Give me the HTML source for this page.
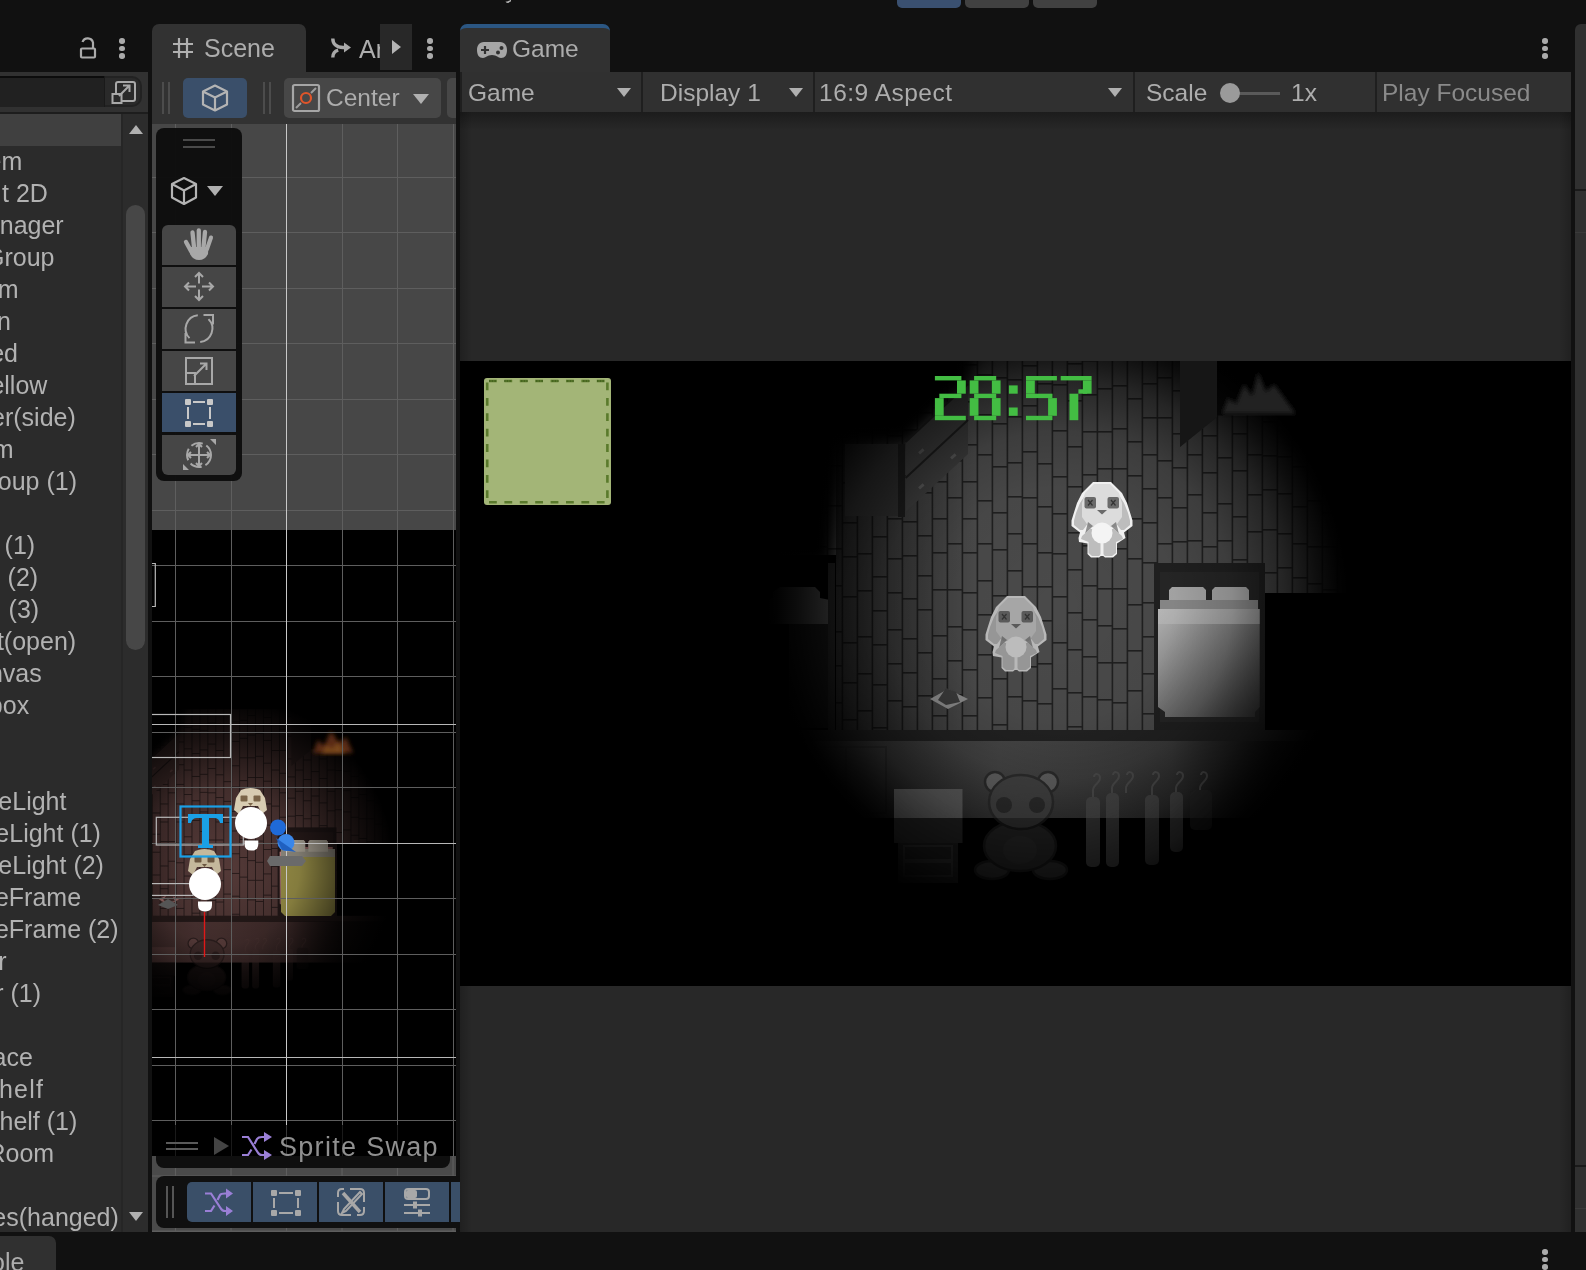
<!DOCTYPE html>
<html><head><meta charset="utf-8">
<style>
*{box-sizing:border-box;margin:0;padding:0}
html,body{width:1586px;height:1270px;overflow:hidden;background:#111111;font-family:"Liberation Sans",sans-serif;color:#c4c4c4}
.a{position:absolute}
.hr{position:absolute;height:32px;line-height:32px;font-size:25px;white-space:nowrap;color:#b2b2b2;will-change:transform}
.kebab{position:absolute;width:6px}
.kebab i{display:block;width:6px;height:6px;border-radius:50%;background:#c4c4c4;margin-bottom:0px}
</style></head>
<body>

<!-- top title descender -->
<div class="a" style="left:505px;top:-3px;width:6px;height:6px;border-bottom:2.2px solid #b0b0b0;border-radius:0 0 4px 4px;transform:rotate(-20deg)"></div>
<!-- top play buttons -->
<div class="a" style="left:897px;top:-6px;width:64px;height:14px;background:#3a5070;border-radius:5px"></div>
<div class="a" style="left:965px;top:-6px;width:64px;height:14px;background:#414141;border-radius:5px"></div>
<div class="a" style="left:1033px;top:-6px;width:64px;height:14px;background:#414141;border-radius:5px"></div>

<!-- ============ HIERARCHY ============ -->
<!-- hierarchy tab row icons -->
<svg class="a" style="left:78px;top:36px" width="20" height="24" viewBox="0 0 20 24"><path d="M4.5 6 A5.5 5.5 0 0 1 15 6.5 V12" fill="none" stroke="#ababab" stroke-width="2.2"/><rect x="3" y="12.5" width="14" height="9" rx="1" fill="none" stroke="#ababab" stroke-width="2.2"/></svg>
<div class="a" style="left:119px;top:38px;width:6px"><i style="display:block;width:5.5px;height:5.5px;border-radius:50%;background:#aaa;margin-bottom:2px"></i><i style="display:block;width:5.5px;height:5.5px;border-radius:50%;background:#aaa;margin-bottom:2px"></i><i style="display:block;width:5.5px;height:5.5px;border-radius:50%;background:#aaa"></i></div>

<div id="hier" class="a" style="left:0;top:72px;width:148px;height:1160px;background:#282828;overflow:hidden">
  <div class="a" style="left:0;top:0;width:148px;height:40px;background:#313131"></div>
  <div class="a" style="left:0;top:40px;width:148px;height:2px;background:#1d1d1d"></div>
  <div class="a" style="left:0;top:4px;width:104px;height:31px;background:#212121;border-top:2px solid #0c0c0c"></div>
  <div class="a" style="left:104px;top:4px;width:3px;height:31px;background:#1a1a1a"></div>
  <div class="a" style="left:105px;top:4px;width:37px;height:31px;background:#2a2a2a;border:2px solid #222;border-left:none;border-radius:0 10px 10px 0"></div>
  <svg class="a" style="left:111px;top:8px" width="26" height="24" viewBox="0 0 26 24"><rect x="5" y="2" width="19" height="19" rx="2" fill="none" stroke="#a9a9a9" stroke-width="2"/><rect x="1.5" y="14" width="9" height="9" fill="#2a2a2a" stroke="#a9a9a9" stroke-width="2"/><path d="M8 16 L18 6 M12 5.5 H18.5 V12" fill="none" stroke="#a9a9a9" stroke-width="2"/></svg>
</div>
<div id="hlist" class="a" style="left:0;top:114px;width:148px;height:1118px;background:#2b2b2b;overflow:hidden">
  <div class="a" style="left:0;top:0;width:121px;height:32px;background:#404040"></div>
  <div class="a" style="left:121px;top:0;width:27px;height:1118px;background:#2c2c2c;border-left:2px solid #262626"></div>
  <div class="a" style="left:126px;top:91px;width:19px;height:445px;background:#474747;border-radius:10px"></div>
  <div class="a" style="left:129px;top:11px;width:0;height:0;border-left:7px solid transparent;border-right:7px solid transparent;border-bottom:9px solid #b0b0b0"></div>
  <div class="a" style="left:129px;top:1098px;width:0;height:0;border-left:7px solid transparent;border-right:7px solid transparent;border-top:9px solid #b0b0b0"></div>
  <div class="a" style="left:0;top:0;width:122px;height:1118px;overflow:hidden">
<div class="hr" style="top:31px;right:99.5px">System</div>
<div class="hr" style="top:63px;right:74.2px">t 2D</div>
<div class="hr" style="top:95px;right:58.0px">Manager</div>
<div class="hr" style="top:127px;right:68.0px">Group</div>
<div class="hr" style="top:159px;right:103.7px">Room</div>
<div class="hr" style="top:191px;right:111.3px">n</div>
<div class="hr" style="top:223px;right:103.7px">Opened</div>
<div class="hr" style="top:255px;right:75.0px">Yellow</div>
<div class="hr" style="top:287px;right:46.5px">Poster(side)</div>
<div class="hr" style="top:319px;right:108.0px">Room</div>
<div class="hr" style="top:351px;right:45.5px">Group (1)</div>
<div class="hr" style="top:415px;right:87.0px">Wall&nbsp;&nbsp;(1)</div>
<div class="hr" style="top:447px;right:84.0px">Wall&nbsp;&nbsp;(2)</div>
<div class="hr" style="top:479px;right:83.2px">Wall&nbsp;&nbsp;(3)</div>
<div class="hr" style="top:511px;right:46.0px">Closet(open)</div>
<div class="hr" style="top:543px;right:80.0px">Canvas</div>
<div class="hr" style="top:575px;right:92.7px">Dialogbox</div>
<div class="hr" style="top:671px;right:55.5px">CandleLight</div>
<div class="hr" style="top:703px;right:21.5px">CandleLight (1)</div>
<div class="hr" style="top:735px;right:18.0px">CandleLight (2)</div>
<div class="hr" style="top:767px;right:40.5px">PictureFrame</div>
<div class="hr" style="top:799px;right:3.4px">PictureFrame (2)</div>
<div class="hr" style="top:831px;right:115.5px">Drawer</div>
<div class="hr" style="top:863px;right:81.0px">Drawer (1)</div>
<div class="hr" style="top:927px;right:89.0px">Fireplace</div>
<div class="hr" style="top:959px;right:78.3px;letter-spacing:1.2px">helf</div>
<div class="hr" style="top:991px;right:45.0px">Bookshelf (1)</div>
<div class="hr" style="top:1023px;right:68.0px">BedRoom</div>
<div class="hr" style="top:1087px;right:3.0px">Clothes(hanged)</div>
  </div>
</div>

<!-- ============ SCENE ============ -->
<div id="scene-tabs">
<div class="a" style="left:152px;top:24px;width:154px;height:48px;background:#323232;border-radius:7px 7px 0 0"></div>
<svg class="a" style="left:171px;top:36px" width="24" height="24" viewBox="0 0 24 24"><path d="M8 2 V22 M16 2 V22 M2 8 H22 M2 16 H22" stroke="#b0b0b0" stroke-width="2.2" fill="none"/></svg>
<div class="a" style="left:204px;top:30px;height:36px;line-height:36px;font-size:25px;color:#adadad;will-change:transform">Scene</div>
<svg class="a" style="left:330px;top:37px" width="22" height="22" viewBox="0 0 22 22"><path d="M2.8 1.5 C2.8 7 6.5 10.5 13 10.5 H15 M2.8 20.5 C2.8 16.5 4.8 14.2 8.2 13.2" fill="none" stroke="#a8a8a8" stroke-width="3.4"/><path d="M14 5.5 L21 10.5 L14 15.5 Z" fill="#a8a8a8"/></svg>
<div class="a" style="left:359px;top:31px;width:21px;height:36px;line-height:36px;font-size:25px;color:#adadad;overflow:hidden;white-space:nowrap;will-change:transform">Arr</div>
<div class="a" style="left:380px;top:24px;width:32px;height:46px;background:#282828"></div>
<div class="a" style="left:392px;top:40px;width:0;height:0;border-top:7.5px solid transparent;border-bottom:7.5px solid transparent;border-left:9px solid #b5b5b5"></div>
<div class="a" style="left:427px;top:38px;width:6px"><i style="display:block;width:5.5px;height:5.5px;border-radius:50%;background:#aaa;margin-bottom:2px"></i><i style="display:block;width:5.5px;height:5.5px;border-radius:50%;background:#aaa;margin-bottom:2px"></i><i style="display:block;width:5.5px;height:5.5px;border-radius:50%;background:#aaa"></i></div>
</div>
<div id="scene-toolbar" class="a" style="left:152px;top:72px;width:304px;height:52px;background:#323232;overflow:hidden">
  <div class="a" style="left:10px;top:10px;width:2px;height:32px;background:#4c4c4c"></div>
  <div class="a" style="left:16px;top:10px;width:2px;height:32px;background:#4c4c4c"></div>
  <div class="a" style="left:31px;top:6px;width:64px;height:40px;background:#3a4f6a;border-radius:5px"></div>
  <svg class="a" style="left:48px;top:11px" width="30" height="30" viewBox="0 0 30 30"><path d="M15 2.5 L27 8.5 V21.5 L15 27.5 L3 21.5 V8.5 Z M3 8.5 L15 14.5 L27 8.5 M15 14.5 V27.5" fill="none" stroke="#b4b4b4" stroke-width="2.2" stroke-linejoin="round"/></svg>
  <div class="a" style="left:111px;top:10px;width:2px;height:32px;background:#4c4c4c"></div>
  <div class="a" style="left:117px;top:10px;width:2px;height:32px;background:#4c4c4c"></div>
  <div class="a" style="left:132px;top:6px;width:157px;height:40px;background:#474747;border-radius:5px"></div>
  <svg class="a" style="left:139px;top:11px" width="30" height="30" viewBox="0 0 30 30"><rect x="2" y="2" width="26" height="26" rx="1.5" fill="none" stroke="#a6a6a6" stroke-width="2.2"/><path d="M5 25 L10 20 M20 10 L25 5" stroke="#9d9d9d" stroke-width="2"/><circle cx="15" cy="15" r="5" fill="none" stroke="#e0552a" stroke-width="2.2"/></svg>
  <div class="a" style="left:174px;top:7px;height:38px;line-height:38px;font-size:24.5px;color:#adadad;will-change:transform">Center</div>
  <div class="a" style="left:261px;top:22px;width:0;height:0;border-left:8px solid transparent;border-right:8px solid transparent;border-top:10px solid #b0b0b0"></div>
  <div class="a" style="left:295px;top:6px;width:20px;height:40px;background:#474747;border-radius:5px"></div>
</div>
<div id="scene-view" class="a" style="left:152px;top:124px;width:304px;height:1108px;overflow:hidden;background:#474747">
<svg class="a" style="left:0;top:0" width="304" height="1108" viewBox="152 124 304 1108">
  <rect x="152" y="530.5" width="304" height="626" fill="#000"/>
  <defs>
 <filter id="brownTint" color-interpolation-filters="sRGB"><feColorMatrix type="matrix" values="1.2 0 0 0 0  0 0.82 0 0 0  0 0 0.8 0 0  0 0 0 1 0"/></filter>
 <radialGradient id="sceneLight" cx="222" cy="868" r="172" gradientUnits="userSpaceOnUse">
  <stop offset="0" stop-color="#000" stop-opacity="0.05"/>
  <stop offset="0.45" stop-color="#000" stop-opacity="0.25"/>
  <stop offset="0.75" stop-color="#000" stop-opacity="0.7"/>
  <stop offset="1" stop-color="#000" stop-opacity="1"/>
 </radialGradient>
</defs>
<g id="scene-room">
 <use href="#room" transform="matrix(0.53 0 0 0.53 -334 529)" filter="url(#brownTint)"/>
 <use href="#lowerObjs" transform="matrix(0.53 0 0 0.53 -334 529)" filter="url(#brownTint)"/>
 <rect x="281" y="849" width="54" height="8" fill="#a8a294"/>
 <path d="M281 857 H335 V912 L331 916 H285 L281 912 Z" fill="#b0a552"/>
 <g transform="matrix(0.53 0 0 0.53 -334 529)"><path d="M1169 609 V590 L1172 587 H1203 L1206 590 V609 Z M1212 609 V590 L1215 587 H1246 L1249 590 V609 Z" fill="#c8c0b0"/></g>
 <rect x="152" y="530" width="304" height="626" fill="url(#sceneLight)"/>
 <path d="M313 753 L318 740 L324 746 L331 731 L339 743 L346 737 L353 753 Z" fill="#5a2a12" filter="url(#soft2)"/>
 <path d="M321 753 L327 745 L332 749 L338 742 L345 753 Z" fill="#7a4a1a" filter="url(#soft2)"/>
 <g id="sbunnies">
  <path d="M241 790 Q250.5 786 260 790 L265 798 L267 810 L262 814 L258 806 H243 L239 814 L234 810 L236 798 Z" fill="#d8ccb2"/>
  <rect x="240.5" y="795.5" width="7" height="6" rx="1" fill="#7a6448"/><rect x="253.5" y="795.5" width="7" height="6" rx="1" fill="#7a6448"/>
  <path d="M248 803 H253 L250.5 806 Z" fill="#7a6448"/>
  <path d="M195 851 Q204.5 847 214 851 L219 859 L221 871 L216 875 L212 867 H197 L193 875 L188 871 L190 859 Z" fill="#c4b89c"/>
  <rect x="194.5" y="856.5" width="7" height="6" rx="1" fill="#6a5640"/><rect x="207.5" y="856.5" width="7" height="6" rx="1" fill="#6a5640"/>
  <path d="M202 864 H207 L204.5 867 Z" fill="#6a5640"/>
 </g>
</g>

  <g stroke="#5e5e5e" stroke-width="1"><line x1="175.5" y1="124" x2="175.5" y2="1232"/><line x1="231.5" y1="124" x2="231.5" y2="1232"/><line x1="342.5" y1="124" x2="342.5" y2="1232"/><line x1="397.5" y1="124" x2="397.5" y2="1232"/><line x1="453.5" y1="124" x2="453.5" y2="1232"/><line x1="152" y1="177.5" x2="456" y2="177.5"/><line x1="152" y1="232.5" x2="456" y2="232.5"/><line x1="152" y1="288.5" x2="456" y2="288.5"/><line x1="152" y1="343.5" x2="456" y2="343.5"/><line x1="152" y1="399.5" x2="456" y2="399.5"/><line x1="152" y1="454.5" x2="456" y2="454.5"/><line x1="152" y1="510.5" x2="456" y2="510.5"/><line x1="152" y1="565.5" x2="456" y2="565.5"/><line x1="152" y1="621.5" x2="456" y2="621.5"/><line x1="152" y1="676.5" x2="456" y2="676.5"/><line x1="152" y1="732.5" x2="456" y2="732.5"/><line x1="152" y1="787.5" x2="456" y2="787.5"/><line x1="152" y1="843.5" x2="456" y2="843.5"/><line x1="152" y1="898.5" x2="456" y2="898.5"/><line x1="152" y1="954.5" x2="456" y2="954.5"/><line x1="152" y1="1009.5" x2="456" y2="1009.5"/><line x1="152" y1="1065.5" x2="456" y2="1065.5"/><line x1="152" y1="1120.5" x2="456" y2="1120.5"/><line x1="152" y1="1176.5" x2="456" y2="1176.5"/></g>
  <line x1="286.5" y1="124" x2="286.5" y2="1232" stroke="#c8c8c8" stroke-width="1"/>
  <g stroke="#b8b8b8" stroke-width="1.2" fill="none">
    <line x1="152" y1="724.5" x2="456" y2="724.5"/>
    <line x1="292" y1="843.5" x2="456" y2="843.5"/>
    <line x1="152" y1="1057.5" x2="456" y2="1057.5"/>
    <rect x="145" y="714.5" width="85.5" height="43"/>
    <rect x="156.3" y="817.3" width="87" height="27.7"/>
    <rect x="145" y="883.6" width="48" height="11.8"/>
    <path d="M152 563.5 H155.3 V606.5 H152"/>
  </g>
  
  <g id="gizmos">
   <rect x="180.5" y="806.5" width="50" height="50" fill="none" stroke="#1aa0e6" stroke-width="2.2"/>
   <path d="M188 814 H223 V823 H220 Q219 818 214 818 H209 V845 H213 V848 H198 V845 H202 V818 H197 Q192 818 191 823 H188 Z" fill="#1aa0e6"/>
   <circle cx="251" cy="823" r="16" fill="#fff"/>
   <path d="M244.5 840.5 H258.3 V844 Q258.3 850.6 251.4 850.6 Q244.5 850.6 244.5 844 Z" fill="#fff"/>
   <circle cx="205" cy="884" r="16" fill="#fff"/>
   <path d="M198 901.5 H212 V905 Q212 911.5 205 911.5 Q198 911.5 198 905 Z" fill="#fff"/>
   <line x1="204.5" y1="912" x2="204.5" y2="957" stroke="#e01818" stroke-width="1.4"/>
   <circle cx="278" cy="827.5" r="8" fill="#1f6ad8"/>
   <circle cx="286" cy="842.5" r="8.5" fill="#3a86e8"/>
   <path d="M276 838 L296 852 L282 850 Z" fill="#2060c0"/>
   <path d="M270 856 H302 L306 861 L302 866 H270 L267 861 Z" fill="#6a6a6a"/>
   <path d="M158 905 L168 899 L178 905 L168 909 Z" fill="#555"/>
  </g>
<line x1="152" y1="1231.3" x2="456" y2="1231.3" stroke="#5a5a5a" stroke-width="1.4"/>
</svg>
</div>


<!-- scene overlays -->
<div class="a" style="left:156px;top:128px;width:86px;height:352.5px;background:rgba(13,13,13,0.96);border-radius:8px"></div>
<div class="a" style="left:183px;top:139px;width:32px;height:2px;background:#4a4a4a"></div>
<div class="a" style="left:183px;top:146px;width:32px;height:2px;background:#4a4a4a"></div>
<svg class="a" style="left:169px;top:176px" width="30" height="30" viewBox="0 0 30 30"><path d="M15 2 L27 8 V21.5 L15 28 L3 21.5 V8 Z M3 8 L15 14.5 L27 8 M15 14.5 V28" fill="none" stroke="#b4b4b4" stroke-width="2.2" stroke-linejoin="round"/></svg>
<div class="a" style="left:207px;top:186px;width:0;height:0;border-left:8px solid transparent;border-right:8px solid transparent;border-top:10.5px solid #b0b0b0"></div>
<div class="a" style="left:162px;top:225px;width:74px;height:40px;background:#464646;border-radius:6px 6px 0 0"></div>
<div class="a" style="left:162px;top:267px;width:74px;height:39.5px;background:#464646"></div>
<div class="a" style="left:162px;top:308.7px;width:74px;height:40px;background:#464646"></div>
<div class="a" style="left:162px;top:351px;width:74px;height:40px;background:#464646"></div>
<div class="a" style="left:162px;top:393.2px;width:74px;height:39.3px;background:#3a4f6a"></div>
<div class="a" style="left:162px;top:435px;width:74px;height:39.5px;background:#464646;border-radius:0 0 6px 6px"></div>
<svg class="a" style="left:162px;top:225px" width="74" height="250" viewBox="0 0 74 250">
 <g fill="#a8a8a8" stroke="#a8a8a8" stroke-linecap="round"><path d="M28 22 L46.5 22 L46 29 Q43 35 37 35 Q31 35 28 29 Z" stroke="none"/><path d="M29.5 27 L24 17" stroke-width="4.3"/><path d="M32 22 L30.5 7.5" stroke-width="4.3"/><path d="M36.8 22 L36.8 5.5" stroke-width="4.3"/><path d="M41.5 22 L43 7" stroke-width="4.3"/><path d="M45 24 L49 12.5" stroke-width="4.1"/></g>
 <g fill="none" stroke="#a8a8a8" stroke-width="2" transform="translate(0,-4)">
  <path d="M37 52 V62.5 M37 68.5 V79 M23 65.5 H34 M40 65.5 H51 M33 56 L37 52 L41 56 M33 75 L37 79 L41 75 M27 61.5 L23 65.5 L27 69.5 M47 61.5 L51 65.5 L47 69.5"/>
 </g>
 <g fill="none" stroke="#a8a8a8" stroke-width="2">
  <path d="M35.8 90.2 A13.5 13.5 0 0 0 27.5 113.1 M23.5 108 V117.5 H33"/>
  <path d="M38.2 117 A13.5 13.5 0 0 0 46.5 94.1 M41.5 90 H51 V99.5"/>
 </g>
 <g fill="none" stroke="#a8a8a8" stroke-width="2" transform="translate(0,-9)">
  <rect x="24" y="142" width="26" height="26"/>
  <path d="M24 157 H33 V168"/>
  <path d="M32 160 L44 148 M38 147.5 H44.5 V154"/>
 </g>
 <g transform="translate(0,-11)">
 <g fill="#c8c8c8"><rect x="23" y="185" width="6" height="6" rx="1"/><rect x="45" y="185" width="6" height="6" rx="1"/><rect x="23" y="207" width="6" height="6" rx="1"/><rect x="45" y="207" width="6" height="6" rx="1"/></g>
 <path d="M31 188 H43 M31 210 H43 M26 193 V205 M48 193 V205" stroke="#c8c8c8" stroke-width="2"/>
 </g>
 <g fill="none" stroke="#a8a8a8" stroke-width="2">
  <circle cx="37" cy="230" r="12" stroke-dasharray="12 4"/>
  <path d="M37 219 V241 M26 230 H48 M34 222 L37 219 L40 222 M34 238 L37 241 L40 238 M29 227 L26 230 L29 233 M45 227 L48 230 L45 233"/>
 </g>
 <path d="M48 214 H54 V220 Z M21 245 V239 L27 245 Z" fill="#a8a8a8"/>
</svg>

<!-- bottom overlays -->
<div class="a" style="left:152px;top:1156px;width:304px;height:76px;background:#4a4a4a"></div>
<svg class="a" style="left:152px;top:1156px" width="304" height="76" viewBox="152 1156 304 76"><g stroke="#5e5e5e" stroke-width="1.2"><line x1="175.5" y1="1156" x2="175.5" y2="1232"/><line x1="231" y1="1156" x2="231" y2="1232"/><line x1="286.5" y1="1156" x2="286.5" y2="1232"/><line x1="342" y1="1156" x2="342" y2="1232"/><line x1="397.5" y1="1156" x2="397.5" y2="1232"/><line x1="453" y1="1156" x2="453" y2="1232"/><line x1="152" y1="1176" x2="456" y2="1176"/></g><line x1="152" y1="1231.3" x2="456" y2="1231.3" stroke="#5e5e5e" stroke-width="1.4"/></svg>
<div class="a" style="left:156px;top:1125px;width:294px;height:31px;background:rgba(0,0,0,0.72)"></div>
<div class="a" style="left:156px;top:1156px;width:294px;height:12px;background:#0f0f0f;border-radius:0 0 8px 8px"></div>
<div class="a" style="left:166px;top:1142px;width:32px;height:2px;background:#5a5a5a"></div>
<div class="a" style="left:166px;top:1148px;width:32px;height:2px;background:#5a5a5a"></div>
<div class="a" style="left:214px;top:1137px;width:0;height:0;border-top:9px solid transparent;border-bottom:9px solid transparent;border-left:15px solid #444"></div>
<svg class="a" style="left:240px;top:1132px" width="32" height="28" viewBox="0 0 32 28"><path d="M2 5 H8 L17.5 20 C18.5 22 19.5 23 22 23 H26 M2 23 H8 L11.5 17.5 M14.5 12 L17 7 C18 5.5 19 5 22 5 H26" fill="none" stroke="#9a7fd6" stroke-width="2.2"/><path d="M24 0 L32 5 L24 10 Z M24 18 L32 23 L24 28 Z" fill="#9a7fd6"/></svg>
<div class="a" style="left:278.5px;top:1128px;height:38px;line-height:38px;font-size:27px;letter-spacing:1.3px;color:#909090;white-space:nowrap;will-change:transform">Sprite Swap</div>

<div class="a" style="left:156px;top:1176.3px;width:310px;height:51.4px;background:#101010;border-radius:8px"></div>
<div class="a" style="left:166px;top:1186px;width:2px;height:32px;background:#555"></div>
<div class="a" style="left:172px;top:1186px;width:2px;height:32px;background:#555"></div>
<div class="a" style="left:187px;top:1182px;width:64px;height:40px;background:#3a4f68;border-radius:5px 0 0 5px"></div>
<div class="a" style="left:253px;top:1182px;width:64px;height:40px;background:#3a4f68"></div>
<div class="a" style="left:319px;top:1182px;width:64px;height:40px;background:#3a4f68"></div>
<div class="a" style="left:385px;top:1182px;width:64px;height:40px;background:#3a4f68"></div>
<div class="a" style="left:451px;top:1182px;width:10px;height:40px;background:#3a4f68"></div>
<svg class="a" style="left:187px;top:1182px" width="264" height="40" viewBox="0 0 264 40">
 <g transform="translate(18,6)"><path d="M0 5.5 H6 L15.5 20 C16.5 22 17.5 23 20 23 H24 M0 23 H6 L9.5 17.5 M12.5 12 L15 7 C16 5.5 17 5.5 20 5.5 H24" fill="none" stroke="#9a7fd6" stroke-width="2.2"/><path d="M21 0.5 L28 5.5 L21 10.5 Z M21 18 L28 23 L21 28 Z" fill="#9a7fd6"/></g>
 <g fill="#a8a8a8"><rect x="84" y="8" width="6" height="6" rx="1"/><rect x="108" y="8" width="6" height="6" rx="1"/><rect x="84" y="28" width="6" height="6" rx="1"/><rect x="108" y="28" width="6" height="6" rx="1"/></g>
 <path d="M92 11 H106 M92 31 H106 M87 16 V26 M111 16 V26" stroke="#a8a8a8" stroke-width="2"/>
 <g fill="none" stroke="#a8a8a8" stroke-width="2"><path d="M163 7 H173 Q177 7 177 11 V20 M164 33 H155 Q151 33 151 29 V20 M151 15 V11 Q151 7 155 7 H157 M177 25 V29 Q177 33 173 33 H170"/></g>
 <path d="M156 11 L173 30" stroke="#a8a8a8" stroke-width="3.5"/>
 <path d="M173 10 L157 27 L155 31 L159 29 L175 12 Z" fill="none" stroke="#a8a8a8" stroke-width="2"/>
 <g fill="none" stroke="#a8a8a8" stroke-width="2"><rect x="218" y="7" width="24" height="10" rx="3"/><path d="M217 23 H243 M217 31 H243"/></g>
 <rect x="219" y="8" width="11" height="8" rx="2" fill="#a8a8a8"/>
 <rect x="226" y="19.5" width="4" height="7" fill="#a8a8a8"/><rect x="231" y="27.5" width="4" height="7" fill="#a8a8a8"/>
</svg>

<!-- ============ GAME ============ -->
<div id="game-tab">
<div class="a" style="left:460px;top:24px;width:149.5px;height:48px;background:#313131;border-radius:7px 7px 0 0;border-top:4px solid #2b5682"></div>
<svg class="a" style="left:476px;top:40px" width="32" height="20" viewBox="0 0 32 20"><path d="M8 2 H24 C29 2 31 6 31 10 C31 15 29 18 25 18 C22 18 21 15 16 15 C11 15 10 18 7 18 C3 18 1 15 1 10 C1 6 3 2 8 2 Z" fill="#a6a6a6"/><path d="M9 6 V14 M5 10 H13" stroke="#313131" stroke-width="2.2"/><circle cx="22" cy="12.5" r="2" fill="#313131"/><circle cx="25.5" cy="8" r="2" fill="#313131"/></svg>
<div class="a" style="left:512px;top:31px;height:36px;line-height:36px;font-size:24.5px;color:#adadad;will-change:transform">Game</div>
<div class="a" style="left:1542px;top:38px;width:6px"><i style="display:block;width:5.5px;height:5.5px;border-radius:50%;background:#aaa;margin-bottom:2px"></i><i style="display:block;width:5.5px;height:5.5px;border-radius:50%;background:#aaa;margin-bottom:2px"></i><i style="display:block;width:5.5px;height:5.5px;border-radius:50%;background:#aaa"></i></div>
</div>
<div id="game-toolbar" class="a" style="left:460px;top:72px;width:1111px;height:40px;background:#1f1f1f">
  <div class="a" style="left:2px;top:0;width:178.5px;height:40px;background:#303030"></div>
  <div class="a" style="left:182.5px;top:0;width:170px;height:40px;background:#303030"></div>
  <div class="a" style="left:354.5px;top:0;width:318.5px;height:40px;background:#303030"></div>
  <div class="a" style="left:675px;top:0;width:240px;height:40px;background:#303030"></div>
  <div class="a" style="left:917px;top:0;width:194px;height:40px;background:#303030"></div>
  <div class="a" style="left:8px;top:3px;height:36px;line-height:36px;font-size:24.5px;color:#adadad;will-change:transform">Game</div>
  <div class="a" style="left:157px;top:16px;width:0;height:0;border-left:7.5px solid transparent;border-right:7.5px solid transparent;border-top:9.5px solid #b0b0b0"></div>
  <div class="a" style="left:200px;top:3px;height:36px;line-height:36px;font-size:24.5px;color:#adadad;will-change:transform">Display 1</div>
  <div class="a" style="left:329px;top:16px;width:0;height:0;border-left:7.5px solid transparent;border-right:7.5px solid transparent;border-top:9.5px solid #b0b0b0"></div>
  <div class="a" style="left:359px;top:3px;height:36px;line-height:36px;font-size:24.5px;letter-spacing:0.5px;color:#adadad;will-change:transform">16:9 Aspect</div>
  <div class="a" style="left:648px;top:16px;width:0;height:0;border-left:7.5px solid transparent;border-right:7.5px solid transparent;border-top:9.5px solid #b0b0b0"></div>
  <div class="a" style="left:686px;top:3px;height:36px;line-height:36px;font-size:24.5px;color:#adadad;will-change:transform">Scale</div>
  <div class="a" style="left:770px;top:19.5px;width:50px;height:3px;background:#5a5a5a"></div>
  <div class="a" style="left:760px;top:11px;width:20px;height:20px;border-radius:50%;background:#9a9a9a"></div>
  <div class="a" style="left:831px;top:3px;height:36px;line-height:36px;font-size:24.5px;color:#adadad;will-change:transform">1x</div>
  <div class="a" style="left:922px;top:3px;height:36px;line-height:36px;font-size:24.5px;color:#8a8a8a;white-space:nowrap;will-change:transform">Play Focused</div>
</div>
<div id="game" class="a" style="left:460px;top:112px;width:1111px;height:1120px;background:#282828;overflow:hidden">
  <div class="a" style="left:0;top:0;width:1111px;height:18px;background:linear-gradient(#1c1c1c,#282828)"></div>
  <div class="a" style="left:1099px;top:0;width:12px;height:1120px;background:linear-gradient(90deg,rgba(0,0,0,0),rgba(0,0,0,0.18))"></div>
  <div class="a" style="left:0;top:0;width:12px;height:1120px;background:linear-gradient(90deg,rgba(0,0,0,0.2),rgba(0,0,0,0))"></div>
  <svg class="a" style="left:0;top:249px" width="1111" height="625" viewBox="460 361 1111 625">
<defs>
 <radialGradient id="lightG" cx="1058" cy="605" r="290" gradientUnits="userSpaceOnUse">
  <stop offset="0" stop-color="#000" stop-opacity="0"/>
  <stop offset="0.4" stop-color="#000" stop-opacity="0.04"/>
  <stop offset="0.6" stop-color="#000" stop-opacity="0.18"/>
  <stop offset="0.78" stop-color="#000" stop-opacity="0.5"/>
  <stop offset="0.9" stop-color="#000" stop-opacity="0.82"/>
  <stop offset="0.97" stop-color="#000" stop-opacity="0.97"/>
  <stop offset="1" stop-color="#000" stop-opacity="1"/>
 </radialGradient>
 <radialGradient id="lightG2" cx="1040" cy="640" r="300" gradientUnits="userSpaceOnUse">
  <stop offset="0" stop-color="#b0b0b0"/>
  <stop offset="0.6" stop-color="#909090"/>
  <stop offset="0.8" stop-color="#505050"/>
  <stop offset="0.95" stop-color="#000"/>
 </radialGradient>
 <mask id="m2" maskUnits="userSpaceOnUse" x="460" y="361" width="1111" height="625"><rect x="460" y="361" width="1111" height="625" fill="url(#lightG2)"/></mask>
 <linearGradient id="leftShade" x1="0" y1="0" x2="1" y2="0">
  <stop offset="0" stop-color="#000" stop-opacity="0.55"/><stop offset="1" stop-color="#000" stop-opacity="0"/>
 </linearGradient>
 <filter id="soft2" x="-20%" y="-20%" width="140%" height="140%"><feGaussianBlur stdDeviation="2"/></filter>
 <filter id="soft" x="-10%" y="-10%" width="120%" height="120%"><feGaussianBlur stdDeviation="7"/></filter>
 <linearGradient id="bedG" x1="0" y1="0" x2="1" y2="1">
  <stop offset="0" stop-color="#b8b8b8"/><stop offset="1" stop-color="#333"/>
 </linearGradient>
 <linearGradient id="bandG" x1="0" y1="0" x2="1" y2="0">
  <stop offset="0" stop-color="#1a1a1a"/><stop offset="0.25" stop-color="#303030"/><stop offset="0.45" stop-color="#484848"/><stop offset="0.62" stop-color="#3c3c3c"/><stop offset="0.72" stop-color="#141414"/><stop offset="1" stop-color="#000"/>
 </linearGradient>
</defs>
<rect x="460" y="361" width="1111" height="625" fill="#000"/>
<g id="room">
 <rect x="540" y="340" width="1020" height="390" fill="#4a4a4a"/>
 <g fill="#202020"><rect x="541.6" y="340" width="1.6" height="390"/><rect x="556.6" y="340" width="1.6" height="390"/><rect x="571.6" y="340" width="1.6" height="390"/><rect x="586.6" y="340" width="1.6" height="390"/><rect x="601.6" y="340" width="1.6" height="390"/><rect x="616.6" y="340" width="1.6" height="390"/><rect x="631.6" y="340" width="1.6" height="390"/><rect x="646.6" y="340" width="1.6" height="390"/><rect x="661.6" y="340" width="1.6" height="390"/><rect x="676.6" y="340" width="1.6" height="390"/><rect x="691.6" y="340" width="1.6" height="390"/><rect x="706.6" y="340" width="1.6" height="390"/><rect x="721.6" y="340" width="1.6" height="390"/><rect x="736.6" y="340" width="1.6" height="390"/><rect x="751.6" y="340" width="1.6" height="390"/><rect x="766.6" y="340" width="1.6" height="390"/><rect x="781.6" y="340" width="1.6" height="390"/><rect x="796.6" y="340" width="1.6" height="390"/><rect x="811.6" y="340" width="1.6" height="390"/><rect x="826.6" y="340" width="1.6" height="390"/><rect x="841.6" y="340" width="1.6" height="390"/><rect x="856.6" y="340" width="1.6" height="390"/><rect x="871.6" y="340" width="1.6" height="390"/><rect x="886.6" y="340" width="1.6" height="390"/><rect x="901.6" y="340" width="1.6" height="390"/><rect x="916.6" y="340" width="1.6" height="390"/><rect x="931.6" y="340" width="1.6" height="390"/><rect x="946.6" y="340" width="1.6" height="390"/><rect x="961.6" y="340" width="1.6" height="390"/><rect x="976.6" y="340" width="1.6" height="390"/><rect x="991.6" y="340" width="1.6" height="390"/><rect x="1006.6" y="340" width="1.6" height="390"/><rect x="1021.6" y="340" width="1.6" height="390"/><rect x="1036.6" y="340" width="1.6" height="390"/><rect x="1051.6" y="340" width="1.6" height="390"/><rect x="1066.6" y="340" width="1.6" height="390"/><rect x="1081.6" y="340" width="1.6" height="390"/><rect x="1096.6" y="340" width="1.6" height="390"/><rect x="1111.6" y="340" width="1.6" height="390"/><rect x="1126.6" y="340" width="1.6" height="390"/><rect x="1141.6" y="340" width="1.6" height="390"/><rect x="1156.6" y="340" width="1.6" height="390"/><rect x="1171.6" y="340" width="1.6" height="390"/><rect x="1186.6" y="340" width="1.6" height="390"/><rect x="1201.6" y="340" width="1.6" height="390"/><rect x="1216.6" y="340" width="1.6" height="390"/><rect x="1231.6" y="340" width="1.6" height="390"/><rect x="1246.6" y="340" width="1.6" height="390"/><rect x="1261.6" y="340" width="1.6" height="390"/><rect x="1276.6" y="340" width="1.6" height="390"/><rect x="1291.6" y="340" width="1.6" height="390"/><rect x="1306.6" y="340" width="1.6" height="390"/><rect x="1321.6" y="340" width="1.6" height="390"/><rect x="1336.6" y="340" width="1.6" height="390"/><rect x="1351.6" y="340" width="1.6" height="390"/><rect x="1366.6" y="340" width="1.6" height="390"/><rect x="1381.6" y="340" width="1.6" height="390"/><rect x="1396.6" y="340" width="1.6" height="390"/><rect x="1411.6" y="340" width="1.6" height="390"/><rect x="1426.6" y="340" width="1.6" height="390"/><rect x="1441.6" y="340" width="1.6" height="390"/><rect x="1456.6" y="340" width="1.6" height="390"/><rect x="1471.6" y="340" width="1.6" height="390"/><rect x="1486.6" y="340" width="1.6" height="390"/><rect x="1501.6" y="340" width="1.6" height="390"/><rect x="1516.6" y="340" width="1.6" height="390"/><rect x="1531.6" y="340" width="1.6" height="390"/><rect x="1546.6" y="340" width="1.6" height="390"/><rect x="542.4" y="355" width="15" height="1.6"/><rect x="542.4" y="392" width="15" height="1.6"/><rect x="542.4" y="435" width="15" height="1.6"/><rect x="542.4" y="469" width="15" height="1.6"/><rect x="542.4" y="503" width="15" height="1.6"/><rect x="542.4" y="549" width="15" height="1.6"/><rect x="542.4" y="583" width="15" height="1.6"/><rect x="542.4" y="623" width="15" height="1.6"/><rect x="542.4" y="669" width="15" height="1.6"/><rect x="542.4" y="703" width="15" height="1.6"/><rect x="557.4" y="350" width="15" height="1.6"/><rect x="557.4" y="384" width="15" height="1.6"/><rect x="557.4" y="427" width="15" height="1.6"/><rect x="557.4" y="470" width="15" height="1.6"/><rect x="557.4" y="504" width="15" height="1.6"/><rect x="557.4" y="541" width="15" height="1.6"/><rect x="557.4" y="575" width="15" height="1.6"/><rect x="557.4" y="621" width="15" height="1.6"/><rect x="557.4" y="664" width="15" height="1.6"/><rect x="557.4" y="698" width="15" height="1.6"/><rect x="572.4" y="346" width="15" height="1.6"/><rect x="572.4" y="383" width="15" height="1.6"/><rect x="572.4" y="429" width="15" height="1.6"/><rect x="572.4" y="463" width="15" height="1.6"/><rect x="572.4" y="509" width="15" height="1.6"/><rect x="572.4" y="555" width="15" height="1.6"/><rect x="572.4" y="598" width="15" height="1.6"/><rect x="572.4" y="632" width="15" height="1.6"/><rect x="572.4" y="669" width="15" height="1.6"/><rect x="572.4" y="703" width="15" height="1.6"/><rect x="587.4" y="379" width="15" height="1.6"/><rect x="587.4" y="419" width="15" height="1.6"/><rect x="587.4" y="462" width="15" height="1.6"/><rect x="587.4" y="499" width="15" height="1.6"/><rect x="587.4" y="545" width="15" height="1.6"/><rect x="587.4" y="579" width="15" height="1.6"/><rect x="587.4" y="625" width="15" height="1.6"/><rect x="587.4" y="665" width="15" height="1.6"/><rect x="587.4" y="711" width="15" height="1.6"/><rect x="602.4" y="345" width="15" height="1.6"/><rect x="602.4" y="391" width="15" height="1.6"/><rect x="602.4" y="428" width="15" height="1.6"/><rect x="602.4" y="468" width="15" height="1.6"/><rect x="602.4" y="502" width="15" height="1.6"/><rect x="602.4" y="548" width="15" height="1.6"/><rect x="602.4" y="582" width="15" height="1.6"/><rect x="602.4" y="628" width="15" height="1.6"/><rect x="602.4" y="662" width="15" height="1.6"/><rect x="602.4" y="708" width="15" height="1.6"/><rect x="617.4" y="362" width="15" height="1.6"/><rect x="617.4" y="408" width="15" height="1.6"/><rect x="617.4" y="451" width="15" height="1.6"/><rect x="617.4" y="491" width="15" height="1.6"/><rect x="617.4" y="534" width="15" height="1.6"/><rect x="617.4" y="580" width="15" height="1.6"/><rect x="617.4" y="623" width="15" height="1.6"/><rect x="617.4" y="663" width="15" height="1.6"/><rect x="617.4" y="703" width="15" height="1.6"/><rect x="632.4" y="376" width="15" height="1.6"/><rect x="632.4" y="413" width="15" height="1.6"/><rect x="632.4" y="447" width="15" height="1.6"/><rect x="632.4" y="493" width="15" height="1.6"/><rect x="632.4" y="533" width="15" height="1.6"/><rect x="632.4" y="579" width="15" height="1.6"/><rect x="632.4" y="622" width="15" height="1.6"/><rect x="632.4" y="662" width="15" height="1.6"/><rect x="632.4" y="705" width="15" height="1.6"/><rect x="647.4" y="367" width="15" height="1.6"/><rect x="647.4" y="401" width="15" height="1.6"/><rect x="647.4" y="435" width="15" height="1.6"/><rect x="647.4" y="481" width="15" height="1.6"/><rect x="647.4" y="524" width="15" height="1.6"/><rect x="647.4" y="561" width="15" height="1.6"/><rect x="647.4" y="601" width="15" height="1.6"/><rect x="647.4" y="638" width="15" height="1.6"/><rect x="647.4" y="681" width="15" height="1.6"/><rect x="647.4" y="724" width="15" height="1.6"/><rect x="662.4" y="383" width="15" height="1.6"/><rect x="662.4" y="417" width="15" height="1.6"/><rect x="662.4" y="463" width="15" height="1.6"/><rect x="662.4" y="509" width="15" height="1.6"/><rect x="662.4" y="549" width="15" height="1.6"/><rect x="662.4" y="589" width="15" height="1.6"/><rect x="662.4" y="629" width="15" height="1.6"/><rect x="662.4" y="675" width="15" height="1.6"/><rect x="662.4" y="718" width="15" height="1.6"/><rect x="677.4" y="376" width="15" height="1.6"/><rect x="677.4" y="410" width="15" height="1.6"/><rect x="677.4" y="444" width="15" height="1.6"/><rect x="677.4" y="484" width="15" height="1.6"/><rect x="677.4" y="527" width="15" height="1.6"/><rect x="677.4" y="561" width="15" height="1.6"/><rect x="677.4" y="595" width="15" height="1.6"/><rect x="677.4" y="635" width="15" height="1.6"/><rect x="677.4" y="681" width="15" height="1.6"/><rect x="677.4" y="724" width="15" height="1.6"/><rect x="692.4" y="372" width="15" height="1.6"/><rect x="692.4" y="412" width="15" height="1.6"/><rect x="692.4" y="446" width="15" height="1.6"/><rect x="692.4" y="489" width="15" height="1.6"/><rect x="692.4" y="529" width="15" height="1.6"/><rect x="692.4" y="566" width="15" height="1.6"/><rect x="692.4" y="612" width="15" height="1.6"/><rect x="692.4" y="646" width="15" height="1.6"/><rect x="692.4" y="689" width="15" height="1.6"/><rect x="692.4" y="723" width="15" height="1.6"/><rect x="707.4" y="375" width="15" height="1.6"/><rect x="707.4" y="412" width="15" height="1.6"/><rect x="707.4" y="449" width="15" height="1.6"/><rect x="707.4" y="492" width="15" height="1.6"/><rect x="707.4" y="535" width="15" height="1.6"/><rect x="707.4" y="578" width="15" height="1.6"/><rect x="707.4" y="612" width="15" height="1.6"/><rect x="707.4" y="649" width="15" height="1.6"/><rect x="707.4" y="692" width="15" height="1.6"/><rect x="722.4" y="365" width="15" height="1.6"/><rect x="722.4" y="402" width="15" height="1.6"/><rect x="722.4" y="445" width="15" height="1.6"/><rect x="722.4" y="491" width="15" height="1.6"/><rect x="722.4" y="531" width="15" height="1.6"/><rect x="722.4" y="574" width="15" height="1.6"/><rect x="722.4" y="614" width="15" height="1.6"/><rect x="722.4" y="657" width="15" height="1.6"/><rect x="722.4" y="694" width="15" height="1.6"/><rect x="737.4" y="344" width="15" height="1.6"/><rect x="737.4" y="381" width="15" height="1.6"/><rect x="737.4" y="418" width="15" height="1.6"/><rect x="737.4" y="455" width="15" height="1.6"/><rect x="737.4" y="489" width="15" height="1.6"/><rect x="737.4" y="532" width="15" height="1.6"/><rect x="737.4" y="578" width="15" height="1.6"/><rect x="737.4" y="615" width="15" height="1.6"/><rect x="737.4" y="655" width="15" height="1.6"/><rect x="737.4" y="695" width="15" height="1.6"/><rect x="752.4" y="347" width="15" height="1.6"/><rect x="752.4" y="393" width="15" height="1.6"/><rect x="752.4" y="433" width="15" height="1.6"/><rect x="752.4" y="479" width="15" height="1.6"/><rect x="752.4" y="525" width="15" height="1.6"/><rect x="752.4" y="565" width="15" height="1.6"/><rect x="752.4" y="602" width="15" height="1.6"/><rect x="752.4" y="648" width="15" height="1.6"/><rect x="752.4" y="694" width="15" height="1.6"/><rect x="752.4" y="728" width="15" height="1.6"/><rect x="767.4" y="380" width="15" height="1.6"/><rect x="767.4" y="426" width="15" height="1.6"/><rect x="767.4" y="469" width="15" height="1.6"/><rect x="767.4" y="512" width="15" height="1.6"/><rect x="767.4" y="555" width="15" height="1.6"/><rect x="767.4" y="598" width="15" height="1.6"/><rect x="767.4" y="632" width="15" height="1.6"/><rect x="767.4" y="675" width="15" height="1.6"/><rect x="767.4" y="718" width="15" height="1.6"/><rect x="782.4" y="349" width="15" height="1.6"/><rect x="782.4" y="386" width="15" height="1.6"/><rect x="782.4" y="429" width="15" height="1.6"/><rect x="782.4" y="466" width="15" height="1.6"/><rect x="782.4" y="500" width="15" height="1.6"/><rect x="782.4" y="540" width="15" height="1.6"/><rect x="782.4" y="586" width="15" height="1.6"/><rect x="782.4" y="620" width="15" height="1.6"/><rect x="782.4" y="654" width="15" height="1.6"/><rect x="782.4" y="688" width="15" height="1.6"/><rect x="797.4" y="347" width="15" height="1.6"/><rect x="797.4" y="381" width="15" height="1.6"/><rect x="797.4" y="421" width="15" height="1.6"/><rect x="797.4" y="467" width="15" height="1.6"/><rect x="797.4" y="501" width="15" height="1.6"/><rect x="797.4" y="535" width="15" height="1.6"/><rect x="797.4" y="572" width="15" height="1.6"/><rect x="797.4" y="618" width="15" height="1.6"/><rect x="797.4" y="661" width="15" height="1.6"/><rect x="797.4" y="698" width="15" height="1.6"/><rect x="812.4" y="383" width="15" height="1.6"/><rect x="812.4" y="429" width="15" height="1.6"/><rect x="812.4" y="469" width="15" height="1.6"/><rect x="812.4" y="512" width="15" height="1.6"/><rect x="812.4" y="546" width="15" height="1.6"/><rect x="812.4" y="580" width="15" height="1.6"/><rect x="812.4" y="623" width="15" height="1.6"/><rect x="812.4" y="666" width="15" height="1.6"/><rect x="812.4" y="709" width="15" height="1.6"/><rect x="827.4" y="354" width="15" height="1.6"/><rect x="827.4" y="391" width="15" height="1.6"/><rect x="827.4" y="425" width="15" height="1.6"/><rect x="827.4" y="465" width="15" height="1.6"/><rect x="827.4" y="505" width="15" height="1.6"/><rect x="827.4" y="548" width="15" height="1.6"/><rect x="827.4" y="585" width="15" height="1.6"/><rect x="827.4" y="631" width="15" height="1.6"/><rect x="827.4" y="665" width="15" height="1.6"/><rect x="827.4" y="702" width="15" height="1.6"/><rect x="842.4" y="356" width="15" height="1.6"/><rect x="842.4" y="402" width="15" height="1.6"/><rect x="842.4" y="436" width="15" height="1.6"/><rect x="842.4" y="482" width="15" height="1.6"/><rect x="842.4" y="522" width="15" height="1.6"/><rect x="842.4" y="556" width="15" height="1.6"/><rect x="842.4" y="596" width="15" height="1.6"/><rect x="842.4" y="642" width="15" height="1.6"/><rect x="842.4" y="682" width="15" height="1.6"/><rect x="842.4" y="719" width="15" height="1.6"/><rect x="857.4" y="375" width="15" height="1.6"/><rect x="857.4" y="421" width="15" height="1.6"/><rect x="857.4" y="467" width="15" height="1.6"/><rect x="857.4" y="513" width="15" height="1.6"/><rect x="857.4" y="553" width="15" height="1.6"/><rect x="857.4" y="590" width="15" height="1.6"/><rect x="857.4" y="636" width="15" height="1.6"/><rect x="857.4" y="673" width="15" height="1.6"/><rect x="857.4" y="710" width="15" height="1.6"/><rect x="872.4" y="373" width="15" height="1.6"/><rect x="872.4" y="410" width="15" height="1.6"/><rect x="872.4" y="447" width="15" height="1.6"/><rect x="872.4" y="493" width="15" height="1.6"/><rect x="872.4" y="536" width="15" height="1.6"/><rect x="872.4" y="576" width="15" height="1.6"/><rect x="872.4" y="610" width="15" height="1.6"/><rect x="872.4" y="644" width="15" height="1.6"/><rect x="872.4" y="684" width="15" height="1.6"/><rect x="872.4" y="727" width="15" height="1.6"/><rect x="887.4" y="349" width="15" height="1.6"/><rect x="887.4" y="395" width="15" height="1.6"/><rect x="887.4" y="435" width="15" height="1.6"/><rect x="887.4" y="478" width="15" height="1.6"/><rect x="887.4" y="518" width="15" height="1.6"/><rect x="887.4" y="558" width="15" height="1.6"/><rect x="887.4" y="592" width="15" height="1.6"/><rect x="887.4" y="629" width="15" height="1.6"/><rect x="887.4" y="663" width="15" height="1.6"/><rect x="887.4" y="700" width="15" height="1.6"/><rect x="902.4" y="349" width="15" height="1.6"/><rect x="902.4" y="386" width="15" height="1.6"/><rect x="902.4" y="429" width="15" height="1.6"/><rect x="902.4" y="475" width="15" height="1.6"/><rect x="902.4" y="521" width="15" height="1.6"/><rect x="902.4" y="555" width="15" height="1.6"/><rect x="902.4" y="598" width="15" height="1.6"/><rect x="902.4" y="638" width="15" height="1.6"/><rect x="902.4" y="672" width="15" height="1.6"/><rect x="902.4" y="706" width="15" height="1.6"/><rect x="917.4" y="375" width="15" height="1.6"/><rect x="917.4" y="412" width="15" height="1.6"/><rect x="917.4" y="455" width="15" height="1.6"/><rect x="917.4" y="492" width="15" height="1.6"/><rect x="917.4" y="535" width="15" height="1.6"/><rect x="917.4" y="575" width="15" height="1.6"/><rect x="917.4" y="609" width="15" height="1.6"/><rect x="917.4" y="652" width="15" height="1.6"/><rect x="917.4" y="695" width="15" height="1.6"/><rect x="932.4" y="373" width="15" height="1.6"/><rect x="932.4" y="407" width="15" height="1.6"/><rect x="932.4" y="444" width="15" height="1.6"/><rect x="932.4" y="481" width="15" height="1.6"/><rect x="932.4" y="518" width="15" height="1.6"/><rect x="932.4" y="552" width="15" height="1.6"/><rect x="932.4" y="589" width="15" height="1.6"/><rect x="932.4" y="635" width="15" height="1.6"/><rect x="932.4" y="678" width="15" height="1.6"/><rect x="932.4" y="715" width="15" height="1.6"/><rect x="947.4" y="377" width="15" height="1.6"/><rect x="947.4" y="420" width="15" height="1.6"/><rect x="947.4" y="460" width="15" height="1.6"/><rect x="947.4" y="497" width="15" height="1.6"/><rect x="947.4" y="543" width="15" height="1.6"/><rect x="947.4" y="589" width="15" height="1.6"/><rect x="947.4" y="626" width="15" height="1.6"/><rect x="947.4" y="660" width="15" height="1.6"/><rect x="947.4" y="694" width="15" height="1.6"/><rect x="962.4" y="364" width="15" height="1.6"/><rect x="962.4" y="401" width="15" height="1.6"/><rect x="962.4" y="444" width="15" height="1.6"/><rect x="962.4" y="481" width="15" height="1.6"/><rect x="962.4" y="518" width="15" height="1.6"/><rect x="962.4" y="552" width="15" height="1.6"/><rect x="962.4" y="592" width="15" height="1.6"/><rect x="962.4" y="629" width="15" height="1.6"/><rect x="962.4" y="669" width="15" height="1.6"/><rect x="962.4" y="715" width="15" height="1.6"/><rect x="977.4" y="374" width="15" height="1.6"/><rect x="977.4" y="414" width="15" height="1.6"/><rect x="977.4" y="454" width="15" height="1.6"/><rect x="977.4" y="500" width="15" height="1.6"/><rect x="977.4" y="543" width="15" height="1.6"/><rect x="977.4" y="580" width="15" height="1.6"/><rect x="977.4" y="614" width="15" height="1.6"/><rect x="977.4" y="654" width="15" height="1.6"/><rect x="977.4" y="697" width="15" height="1.6"/><rect x="992.4" y="377" width="15" height="1.6"/><rect x="992.4" y="423" width="15" height="1.6"/><rect x="992.4" y="466" width="15" height="1.6"/><rect x="992.4" y="512" width="15" height="1.6"/><rect x="992.4" y="549" width="15" height="1.6"/><rect x="992.4" y="595" width="15" height="1.6"/><rect x="992.4" y="632" width="15" height="1.6"/><rect x="992.4" y="678" width="15" height="1.6"/><rect x="992.4" y="724" width="15" height="1.6"/><rect x="1007.4" y="379" width="15" height="1.6"/><rect x="1007.4" y="416" width="15" height="1.6"/><rect x="1007.4" y="462" width="15" height="1.6"/><rect x="1007.4" y="496" width="15" height="1.6"/><rect x="1007.4" y="533" width="15" height="1.6"/><rect x="1007.4" y="570" width="15" height="1.6"/><rect x="1007.4" y="607" width="15" height="1.6"/><rect x="1007.4" y="650" width="15" height="1.6"/><rect x="1007.4" y="696" width="15" height="1.6"/><rect x="1022.4" y="365" width="15" height="1.6"/><rect x="1022.4" y="405" width="15" height="1.6"/><rect x="1022.4" y="451" width="15" height="1.6"/><rect x="1022.4" y="497" width="15" height="1.6"/><rect x="1022.4" y="543" width="15" height="1.6"/><rect x="1022.4" y="586" width="15" height="1.6"/><rect x="1022.4" y="620" width="15" height="1.6"/><rect x="1022.4" y="666" width="15" height="1.6"/><rect x="1022.4" y="700" width="15" height="1.6"/><rect x="1037.4" y="349" width="15" height="1.6"/><rect x="1037.4" y="383" width="15" height="1.6"/><rect x="1037.4" y="417" width="15" height="1.6"/><rect x="1037.4" y="463" width="15" height="1.6"/><rect x="1037.4" y="506" width="15" height="1.6"/><rect x="1037.4" y="552" width="15" height="1.6"/><rect x="1037.4" y="586" width="15" height="1.6"/><rect x="1037.4" y="620" width="15" height="1.6"/><rect x="1037.4" y="663" width="15" height="1.6"/><rect x="1037.4" y="703" width="15" height="1.6"/><rect x="1052.4" y="384" width="15" height="1.6"/><rect x="1052.4" y="430" width="15" height="1.6"/><rect x="1052.4" y="476" width="15" height="1.6"/><rect x="1052.4" y="513" width="15" height="1.6"/><rect x="1052.4" y="553" width="15" height="1.6"/><rect x="1052.4" y="596" width="15" height="1.6"/><rect x="1052.4" y="642" width="15" height="1.6"/><rect x="1052.4" y="688" width="15" height="1.6"/><rect x="1067.4" y="363" width="15" height="1.6"/><rect x="1067.4" y="400" width="15" height="1.6"/><rect x="1067.4" y="446" width="15" height="1.6"/><rect x="1067.4" y="486" width="15" height="1.6"/><rect x="1067.4" y="532" width="15" height="1.6"/><rect x="1067.4" y="569" width="15" height="1.6"/><rect x="1067.4" y="612" width="15" height="1.6"/><rect x="1067.4" y="649" width="15" height="1.6"/><rect x="1067.4" y="692" width="15" height="1.6"/><rect x="1067.4" y="726" width="15" height="1.6"/><rect x="1082.4" y="360" width="15" height="1.6"/><rect x="1082.4" y="394" width="15" height="1.6"/><rect x="1082.4" y="431" width="15" height="1.6"/><rect x="1082.4" y="474" width="15" height="1.6"/><rect x="1082.4" y="508" width="15" height="1.6"/><rect x="1082.4" y="545" width="15" height="1.6"/><rect x="1082.4" y="585" width="15" height="1.6"/><rect x="1082.4" y="619" width="15" height="1.6"/><rect x="1082.4" y="656" width="15" height="1.6"/><rect x="1082.4" y="696" width="15" height="1.6"/><rect x="1097.4" y="351" width="15" height="1.6"/><rect x="1097.4" y="388" width="15" height="1.6"/><rect x="1097.4" y="431" width="15" height="1.6"/><rect x="1097.4" y="468" width="15" height="1.6"/><rect x="1097.4" y="502" width="15" height="1.6"/><rect x="1097.4" y="545" width="15" height="1.6"/><rect x="1097.4" y="588" width="15" height="1.6"/><rect x="1097.4" y="625" width="15" height="1.6"/><rect x="1097.4" y="662" width="15" height="1.6"/><rect x="1097.4" y="699" width="15" height="1.6"/><rect x="1112.4" y="385" width="15" height="1.6"/><rect x="1112.4" y="428" width="15" height="1.6"/><rect x="1112.4" y="468" width="15" height="1.6"/><rect x="1112.4" y="511" width="15" height="1.6"/><rect x="1112.4" y="548" width="15" height="1.6"/><rect x="1112.4" y="588" width="15" height="1.6"/><rect x="1112.4" y="628" width="15" height="1.6"/><rect x="1112.4" y="662" width="15" height="1.6"/><rect x="1112.4" y="702" width="15" height="1.6"/><rect x="1127.4" y="355" width="15" height="1.6"/><rect x="1127.4" y="398" width="15" height="1.6"/><rect x="1127.4" y="441" width="15" height="1.6"/><rect x="1127.4" y="475" width="15" height="1.6"/><rect x="1127.4" y="518" width="15" height="1.6"/><rect x="1127.4" y="558" width="15" height="1.6"/><rect x="1127.4" y="604" width="15" height="1.6"/><rect x="1127.4" y="650" width="15" height="1.6"/><rect x="1127.4" y="690" width="15" height="1.6"/><rect x="1142.4" y="383" width="15" height="1.6"/><rect x="1142.4" y="417" width="15" height="1.6"/><rect x="1142.4" y="454" width="15" height="1.6"/><rect x="1142.4" y="488" width="15" height="1.6"/><rect x="1142.4" y="522" width="15" height="1.6"/><rect x="1142.4" y="562" width="15" height="1.6"/><rect x="1142.4" y="602" width="15" height="1.6"/><rect x="1142.4" y="636" width="15" height="1.6"/><rect x="1142.4" y="673" width="15" height="1.6"/><rect x="1142.4" y="713" width="15" height="1.6"/><rect x="1157.4" y="377" width="15" height="1.6"/><rect x="1157.4" y="417" width="15" height="1.6"/><rect x="1157.4" y="460" width="15" height="1.6"/><rect x="1157.4" y="497" width="15" height="1.6"/><rect x="1157.4" y="543" width="15" height="1.6"/><rect x="1157.4" y="589" width="15" height="1.6"/><rect x="1157.4" y="635" width="15" height="1.6"/><rect x="1157.4" y="678" width="15" height="1.6"/><rect x="1157.4" y="718" width="15" height="1.6"/><rect x="1172.4" y="353" width="15" height="1.6"/><rect x="1172.4" y="390" width="15" height="1.6"/><rect x="1172.4" y="433" width="15" height="1.6"/><rect x="1172.4" y="467" width="15" height="1.6"/><rect x="1172.4" y="507" width="15" height="1.6"/><rect x="1172.4" y="541" width="15" height="1.6"/><rect x="1172.4" y="575" width="15" height="1.6"/><rect x="1172.4" y="615" width="15" height="1.6"/><rect x="1172.4" y="649" width="15" height="1.6"/><rect x="1172.4" y="695" width="15" height="1.6"/><rect x="1187.4" y="343" width="15" height="1.6"/><rect x="1187.4" y="377" width="15" height="1.6"/><rect x="1187.4" y="420" width="15" height="1.6"/><rect x="1187.4" y="454" width="15" height="1.6"/><rect x="1187.4" y="494" width="15" height="1.6"/><rect x="1187.4" y="540" width="15" height="1.6"/><rect x="1187.4" y="583" width="15" height="1.6"/><rect x="1187.4" y="623" width="15" height="1.6"/><rect x="1187.4" y="669" width="15" height="1.6"/><rect x="1187.4" y="706" width="15" height="1.6"/><rect x="1202.4" y="364" width="15" height="1.6"/><rect x="1202.4" y="401" width="15" height="1.6"/><rect x="1202.4" y="435" width="15" height="1.6"/><rect x="1202.4" y="472" width="15" height="1.6"/><rect x="1202.4" y="512" width="15" height="1.6"/><rect x="1202.4" y="546" width="15" height="1.6"/><rect x="1202.4" y="583" width="15" height="1.6"/><rect x="1202.4" y="620" width="15" height="1.6"/><rect x="1202.4" y="660" width="15" height="1.6"/><rect x="1202.4" y="700" width="15" height="1.6"/><rect x="1217.4" y="374" width="15" height="1.6"/><rect x="1217.4" y="414" width="15" height="1.6"/><rect x="1217.4" y="457" width="15" height="1.6"/><rect x="1217.4" y="503" width="15" height="1.6"/><rect x="1217.4" y="540" width="15" height="1.6"/><rect x="1217.4" y="580" width="15" height="1.6"/><rect x="1217.4" y="620" width="15" height="1.6"/><rect x="1217.4" y="654" width="15" height="1.6"/><rect x="1217.4" y="694" width="15" height="1.6"/><rect x="1232.4" y="341" width="15" height="1.6"/><rect x="1232.4" y="387" width="15" height="1.6"/><rect x="1232.4" y="433" width="15" height="1.6"/><rect x="1232.4" y="470" width="15" height="1.6"/><rect x="1232.4" y="516" width="15" height="1.6"/><rect x="1232.4" y="559" width="15" height="1.6"/><rect x="1232.4" y="596" width="15" height="1.6"/><rect x="1232.4" y="639" width="15" height="1.6"/><rect x="1232.4" y="673" width="15" height="1.6"/><rect x="1232.4" y="716" width="15" height="1.6"/><rect x="1247.4" y="365" width="15" height="1.6"/><rect x="1247.4" y="408" width="15" height="1.6"/><rect x="1247.4" y="454" width="15" height="1.6"/><rect x="1247.4" y="494" width="15" height="1.6"/><rect x="1247.4" y="531" width="15" height="1.6"/><rect x="1247.4" y="568" width="15" height="1.6"/><rect x="1247.4" y="608" width="15" height="1.6"/><rect x="1247.4" y="645" width="15" height="1.6"/><rect x="1247.4" y="682" width="15" height="1.6"/><rect x="1247.4" y="725" width="15" height="1.6"/><rect x="1262.4" y="384" width="15" height="1.6"/><rect x="1262.4" y="421" width="15" height="1.6"/><rect x="1262.4" y="455" width="15" height="1.6"/><rect x="1262.4" y="489" width="15" height="1.6"/><rect x="1262.4" y="529" width="15" height="1.6"/><rect x="1262.4" y="572" width="15" height="1.6"/><rect x="1262.4" y="609" width="15" height="1.6"/><rect x="1262.4" y="643" width="15" height="1.6"/><rect x="1262.4" y="677" width="15" height="1.6"/><rect x="1262.4" y="720" width="15" height="1.6"/><rect x="1277.4" y="370" width="15" height="1.6"/><rect x="1277.4" y="410" width="15" height="1.6"/><rect x="1277.4" y="456" width="15" height="1.6"/><rect x="1277.4" y="493" width="15" height="1.6"/><rect x="1277.4" y="533" width="15" height="1.6"/><rect x="1277.4" y="567" width="15" height="1.6"/><rect x="1277.4" y="610" width="15" height="1.6"/><rect x="1277.4" y="647" width="15" height="1.6"/><rect x="1277.4" y="684" width="15" height="1.6"/><rect x="1277.4" y="724" width="15" height="1.6"/><rect x="1292.4" y="340" width="15" height="1.6"/><rect x="1292.4" y="380" width="15" height="1.6"/><rect x="1292.4" y="420" width="15" height="1.6"/><rect x="1292.4" y="466" width="15" height="1.6"/><rect x="1292.4" y="506" width="15" height="1.6"/><rect x="1292.4" y="543" width="15" height="1.6"/><rect x="1292.4" y="577" width="15" height="1.6"/><rect x="1292.4" y="617" width="15" height="1.6"/><rect x="1292.4" y="654" width="15" height="1.6"/><rect x="1292.4" y="694" width="15" height="1.6"/><rect x="1307.4" y="340" width="15" height="1.6"/><rect x="1307.4" y="383" width="15" height="1.6"/><rect x="1307.4" y="417" width="15" height="1.6"/><rect x="1307.4" y="460" width="15" height="1.6"/><rect x="1307.4" y="500" width="15" height="1.6"/><rect x="1307.4" y="546" width="15" height="1.6"/><rect x="1307.4" y="583" width="15" height="1.6"/><rect x="1307.4" y="620" width="15" height="1.6"/><rect x="1307.4" y="666" width="15" height="1.6"/><rect x="1307.4" y="700" width="15" height="1.6"/><rect x="1322.4" y="352" width="15" height="1.6"/><rect x="1322.4" y="386" width="15" height="1.6"/><rect x="1322.4" y="423" width="15" height="1.6"/><rect x="1322.4" y="466" width="15" height="1.6"/><rect x="1322.4" y="512" width="15" height="1.6"/><rect x="1322.4" y="546" width="15" height="1.6"/><rect x="1322.4" y="589" width="15" height="1.6"/><rect x="1322.4" y="623" width="15" height="1.6"/><rect x="1322.4" y="663" width="15" height="1.6"/><rect x="1322.4" y="703" width="15" height="1.6"/><rect x="1337.4" y="344" width="15" height="1.6"/><rect x="1337.4" y="390" width="15" height="1.6"/><rect x="1337.4" y="427" width="15" height="1.6"/><rect x="1337.4" y="473" width="15" height="1.6"/><rect x="1337.4" y="516" width="15" height="1.6"/><rect x="1337.4" y="556" width="15" height="1.6"/><rect x="1337.4" y="599" width="15" height="1.6"/><rect x="1337.4" y="636" width="15" height="1.6"/><rect x="1337.4" y="676" width="15" height="1.6"/><rect x="1337.4" y="722" width="15" height="1.6"/><rect x="1352.4" y="342" width="15" height="1.6"/><rect x="1352.4" y="388" width="15" height="1.6"/><rect x="1352.4" y="431" width="15" height="1.6"/><rect x="1352.4" y="477" width="15" height="1.6"/><rect x="1352.4" y="514" width="15" height="1.6"/><rect x="1352.4" y="560" width="15" height="1.6"/><rect x="1352.4" y="606" width="15" height="1.6"/><rect x="1352.4" y="652" width="15" height="1.6"/><rect x="1352.4" y="686" width="15" height="1.6"/><rect x="1367.4" y="376" width="15" height="1.6"/><rect x="1367.4" y="413" width="15" height="1.6"/><rect x="1367.4" y="447" width="15" height="1.6"/><rect x="1367.4" y="481" width="15" height="1.6"/><rect x="1367.4" y="515" width="15" height="1.6"/><rect x="1367.4" y="552" width="15" height="1.6"/><rect x="1367.4" y="592" width="15" height="1.6"/><rect x="1367.4" y="626" width="15" height="1.6"/><rect x="1367.4" y="669" width="15" height="1.6"/><rect x="1367.4" y="712" width="15" height="1.6"/><rect x="1382.4" y="342" width="15" height="1.6"/><rect x="1382.4" y="376" width="15" height="1.6"/><rect x="1382.4" y="422" width="15" height="1.6"/><rect x="1382.4" y="459" width="15" height="1.6"/><rect x="1382.4" y="502" width="15" height="1.6"/><rect x="1382.4" y="542" width="15" height="1.6"/><rect x="1382.4" y="576" width="15" height="1.6"/><rect x="1382.4" y="619" width="15" height="1.6"/><rect x="1382.4" y="653" width="15" height="1.6"/><rect x="1382.4" y="699" width="15" height="1.6"/><rect x="1397.4" y="344" width="15" height="1.6"/><rect x="1397.4" y="390" width="15" height="1.6"/><rect x="1397.4" y="424" width="15" height="1.6"/><rect x="1397.4" y="467" width="15" height="1.6"/><rect x="1397.4" y="507" width="15" height="1.6"/><rect x="1397.4" y="541" width="15" height="1.6"/><rect x="1397.4" y="581" width="15" height="1.6"/><rect x="1397.4" y="618" width="15" height="1.6"/><rect x="1397.4" y="655" width="15" height="1.6"/><rect x="1397.4" y="692" width="15" height="1.6"/><rect x="1412.4" y="362" width="15" height="1.6"/><rect x="1412.4" y="405" width="15" height="1.6"/><rect x="1412.4" y="439" width="15" height="1.6"/><rect x="1412.4" y="482" width="15" height="1.6"/><rect x="1412.4" y="522" width="15" height="1.6"/><rect x="1412.4" y="556" width="15" height="1.6"/><rect x="1412.4" y="602" width="15" height="1.6"/><rect x="1412.4" y="639" width="15" height="1.6"/><rect x="1412.4" y="673" width="15" height="1.6"/><rect x="1412.4" y="719" width="15" height="1.6"/><rect x="1427.4" y="355" width="15" height="1.6"/><rect x="1427.4" y="395" width="15" height="1.6"/><rect x="1427.4" y="441" width="15" height="1.6"/><rect x="1427.4" y="487" width="15" height="1.6"/><rect x="1427.4" y="524" width="15" height="1.6"/><rect x="1427.4" y="558" width="15" height="1.6"/><rect x="1427.4" y="601" width="15" height="1.6"/><rect x="1427.4" y="635" width="15" height="1.6"/><rect x="1427.4" y="678" width="15" height="1.6"/><rect x="1427.4" y="718" width="15" height="1.6"/><rect x="1442.4" y="371" width="15" height="1.6"/><rect x="1442.4" y="414" width="15" height="1.6"/><rect x="1442.4" y="454" width="15" height="1.6"/><rect x="1442.4" y="500" width="15" height="1.6"/><rect x="1442.4" y="540" width="15" height="1.6"/><rect x="1442.4" y="583" width="15" height="1.6"/><rect x="1442.4" y="626" width="15" height="1.6"/><rect x="1442.4" y="669" width="15" height="1.6"/><rect x="1442.4" y="703" width="15" height="1.6"/><rect x="1457.4" y="349" width="15" height="1.6"/><rect x="1457.4" y="383" width="15" height="1.6"/><rect x="1457.4" y="426" width="15" height="1.6"/><rect x="1457.4" y="460" width="15" height="1.6"/><rect x="1457.4" y="500" width="15" height="1.6"/><rect x="1457.4" y="543" width="15" height="1.6"/><rect x="1457.4" y="577" width="15" height="1.6"/><rect x="1457.4" y="623" width="15" height="1.6"/><rect x="1457.4" y="666" width="15" height="1.6"/><rect x="1457.4" y="706" width="15" height="1.6"/><rect x="1472.4" y="349" width="15" height="1.6"/><rect x="1472.4" y="386" width="15" height="1.6"/><rect x="1472.4" y="420" width="15" height="1.6"/><rect x="1472.4" y="466" width="15" height="1.6"/><rect x="1472.4" y="500" width="15" height="1.6"/><rect x="1472.4" y="537" width="15" height="1.6"/><rect x="1472.4" y="583" width="15" height="1.6"/><rect x="1472.4" y="623" width="15" height="1.6"/><rect x="1472.4" y="663" width="15" height="1.6"/><rect x="1472.4" y="700" width="15" height="1.6"/><rect x="1487.4" y="377" width="15" height="1.6"/><rect x="1487.4" y="423" width="15" height="1.6"/><rect x="1487.4" y="463" width="15" height="1.6"/><rect x="1487.4" y="497" width="15" height="1.6"/><rect x="1487.4" y="537" width="15" height="1.6"/><rect x="1487.4" y="574" width="15" height="1.6"/><rect x="1487.4" y="617" width="15" height="1.6"/><rect x="1487.4" y="660" width="15" height="1.6"/><rect x="1487.4" y="703" width="15" height="1.6"/><rect x="1502.4" y="347" width="15" height="1.6"/><rect x="1502.4" y="390" width="15" height="1.6"/><rect x="1502.4" y="433" width="15" height="1.6"/><rect x="1502.4" y="476" width="15" height="1.6"/><rect x="1502.4" y="516" width="15" height="1.6"/><rect x="1502.4" y="553" width="15" height="1.6"/><rect x="1502.4" y="596" width="15" height="1.6"/><rect x="1502.4" y="636" width="15" height="1.6"/><rect x="1502.4" y="679" width="15" height="1.6"/><rect x="1502.4" y="719" width="15" height="1.6"/><rect x="1517.4" y="378" width="15" height="1.6"/><rect x="1517.4" y="412" width="15" height="1.6"/><rect x="1517.4" y="452" width="15" height="1.6"/><rect x="1517.4" y="492" width="15" height="1.6"/><rect x="1517.4" y="535" width="15" height="1.6"/><rect x="1517.4" y="569" width="15" height="1.6"/><rect x="1517.4" y="606" width="15" height="1.6"/><rect x="1517.4" y="640" width="15" height="1.6"/><rect x="1517.4" y="680" width="15" height="1.6"/><rect x="1517.4" y="720" width="15" height="1.6"/><rect x="1532.4" y="343" width="15" height="1.6"/><rect x="1532.4" y="386" width="15" height="1.6"/><rect x="1532.4" y="432" width="15" height="1.6"/><rect x="1532.4" y="466" width="15" height="1.6"/><rect x="1532.4" y="506" width="15" height="1.6"/><rect x="1532.4" y="549" width="15" height="1.6"/><rect x="1532.4" y="589" width="15" height="1.6"/><rect x="1532.4" y="623" width="15" height="1.6"/><rect x="1532.4" y="663" width="15" height="1.6"/><rect x="1532.4" y="697" width="15" height="1.6"/><rect x="1547.4" y="378" width="15" height="1.6"/><rect x="1547.4" y="418" width="15" height="1.6"/><rect x="1547.4" y="455" width="15" height="1.6"/><rect x="1547.4" y="492" width="15" height="1.6"/><rect x="1547.4" y="532" width="15" height="1.6"/><rect x="1547.4" y="575" width="15" height="1.6"/><rect x="1547.4" y="621" width="15" height="1.6"/><rect x="1547.4" y="661" width="15" height="1.6"/><rect x="1547.4" y="698" width="15" height="1.6"/></g>
 <rect x="836" y="430" width="140" height="300" fill="url(#leftShade)"/>
 <rect x="540" y="730" width="1020" height="11" fill="#222"/>
 <rect x="540" y="741" width="1020" height="77" fill="url(#bandG)"/>
 <g fill="none" stroke="#303030" stroke-width="2"><rect x="806" y="747" width="40" height="66"/><rect x="846" y="747" width="40" height="66"/></g>
 <!-- drawer upper-left -->
 <path d="M440 300 H990 L968 384 L905 442 L842 444 L830 565 H440 Z" fill="#000" filter="url(#soft)"/>
 <path d="M845 444 H898 V516 H845 Z" fill="#2c2c2c"/>
 <path d="M898 444 H905 V517 H898 Z" fill="#1a1a1a"/>
 <path d="M905.6 442 L968 384 V454 L905.6 512 Z" fill="#3a3a3a"/>
 <path d="M905.6 478 L968 420" stroke="#1c1c1c" stroke-width="2"/>
 <path d="M905.6 442 L968 384" stroke="#1c1c1c" stroke-width="2"/>
 <g fill="#555"><rect x="918" y="450" width="6" height="3" transform="rotate(-40 921 451)"/><rect x="950" y="455" width="6" height="3" transform="rotate(-40 953 456)"/><rect x="918" y="485" width="6" height="3" transform="rotate(-40 921 486)"/></g>
 <!-- left lamp/nightstand -->
 <rect x="540" y="555" width="296" height="175" fill="#000"/>
 <path d="M765 624 V600 L773 598 V592 L780 587 H815 L820 592 V598 L830 600 V624 Z" fill="#444"/>
 <rect x="789" y="624" width="42" height="104" fill="#161616"/>
 <rect x="828" y="563" width="7" height="167" fill="#202020"/>
 <!-- fireplace -->
 <path d="M1217 340 H1296 V415 H1217 Z" fill="#141414"/>
 
 <path d="M1180 340 H1217 V417 L1180 447 Z" fill="#3a3a3a"/>
 <!-- bed -->
 <rect x="1265" y="593" width="310" height="137" fill="#000"/>
 <rect x="1154" y="563" width="111" height="167" fill="#202020"/>
 <rect x="1160" y="572" width="99" height="150" fill="#262626"/>
 <path d="M1169 609 V590 L1172 587 H1203 L1206 590 V609 Z M1212 609 V590 L1215 587 H1246 L1249 590 V609 Z" fill="#a8a8a8"/>
 <rect x="1160" y="600" width="98" height="10" fill="#8a8a8a"/>
 <path d="M1158 609 H1259.7 V707 L1255 712 V717 H1165 V712 L1158 707 Z" fill="url(#bedG)"/>
 <rect x="1158" y="609" width="101.7" height="15" fill="#c0c0c0" opacity="0.55"/>
 <!-- rock -->
 <path d="M930 699 L948 689 L968 699 L948 709 Z" fill="#8a8a8a"/>
 <path d="M938 700 L946 688 L956 692 L960 702 L946 705 Z" fill="#3a3a3a"/>
</g>
<rect x="460" y="361" width="1111" height="625" fill="url(#lightG)"/>
<path d="M1222 414 L1228 398 L1236 404 L1244 384 L1252 396 L1258 372 L1266 392 L1274 384 L1296 414 Z" fill="#222" filter="url(#soft2)"/>
<rect x="1180" y="361" width="37" height="56" fill="#161616"/><path d="M1180 417 H1217 L1180 447 Z" fill="#161616"/>
<!-- shadow below front -->
<rect x="460" y="818" width="1111" height="168" fill="#000" opacity="0.35"/>
<g id="lowerObjs" mask="url(#m2)">
 <!-- lower furniture (in shadow) -->
 <rect x="894" y="789" width="68.5" height="29" fill="#606060"/>
 <rect x="894" y="818" width="68.5" height="25" fill="#2a2a2a"/>
 <rect x="898" y="843" width="60" height="40" fill="#202020"/>
 <g fill="none" stroke="#333" stroke-width="2"><rect x="904" y="846" width="48" height="14"/><rect x="904" y="862" width="48" height="14"/></g>
 <g stroke="#1a1a1a" stroke-width="2.5">
 <circle cx="995" cy="782" r="10" fill="#666"/><circle cx="1048" cy="782" r="10" fill="#666"/>
 <ellipse cx="992" cy="870" rx="17" ry="9" fill="#303030"/><ellipse cx="1050" cy="870" rx="17" ry="9" fill="#303030"/>
 <ellipse cx="1020" cy="846" rx="36" ry="25" fill="#2a2a2a"/>
 <ellipse cx="1021" cy="802" rx="32" ry="27" fill="#3a3a3a"/>
 </g>
 <circle cx="1004" cy="805" r="8" fill="#1c1c1c"/><circle cx="1037" cy="805" r="8" fill="#1c1c1c"/>
 <ellipse cx="1020" cy="850" rx="17" ry="14" fill="#303030"/>
 <g fill="#444"><rect x="1086" y="797" width="14" height="70" rx="5"/><rect x="1106" y="793" width="13" height="74" rx="5"/><rect x="1145" y="795" width="14" height="70" rx="5"/><rect x="1170" y="792" width="13" height="60" rx="5"/><rect x="1190" y="790" width="22" height="40" rx="5" fill="#1c1c1c"/></g>
 <g fill="none" stroke="#4a4a4a" stroke-width="2"><path d="M1093 797 V790 C1093 785 1100 783 1100 778 C1100 773 1094 773 1094 777"/><path d="M1112 793 V788 C1112 783 1119 781 1119 776 C1119 771 1113 771 1113 775"/><path d="M1126 793 V788 C1126 783 1133 781 1133 776 C1133 771 1127 771 1127 775"/><path d="M1152 795 V788 C1152 783 1159 781 1159 776 C1159 771 1153 771 1153 775"/><path d="M1176 792 V788 C1176 783 1183 781 1183 776 C1183 771 1177 771 1177 775"/><path d="M1200 790 V788 C1200 783 1207 781 1207 776 C1207 771 1201 771 1201 775"/></g>
</g>
<g transform="translate(1071,482)">
<path d="M22 0 H40 L51 11 L56 21 L59.5 32 L61.5 38.5 V44 L53 50.5 L54.5 56 L46 61.5 V72 L42 75.6 H34 L31 73 L28 75.6 H20 L16.5 72 V61.5 L8 60 L7.5 56 L9 50.5 L0.5 44 V38.5 L2.5 32 L6 21 L11 11 Z" fill="#f0f0f0"/>
<path d="M3 38.5 L5 31 L9 21 L13 15 L18 40 L12 48 L9 48 L3 43 Z" fill="#bdbdbd"/>
<path d="M59 38.5 L57 31 L53 21 L49 15 L44 40 L50 48 L53 48 L59 43 Z" fill="#bdbdbd"/>
<path d="M23 2 H39 L48 11 L51 21 L51 35 L44 45 H18 L11 35 L11 21 L14 11 Z" fill="#dcdcdc"/>
<path d="M17 40 L22 44 L14 52 Z M45 40 L40 44 L48 52 Z" fill="#444" opacity="0.55"/>
<path d="M11 54 L19 47 H43 L51 54 L52 57 L45 60 V71 L41 74 H34 L31 71 L28 74 H21 L17.5 71 V60 L10 57 Z" fill="#bdbdbd"/>
<circle cx="31" cy="51" r="10.5" fill="#f4f4f4"/>
<rect x="29.5" y="61" width="3" height="13" fill="#f0f0f0"/>
<rect x="13.5" y="15" width="11.5" height="11.5" rx="2" fill="#6a6a6a"/>
<rect x="36.5" y="15" width="11.5" height="11.5" rx="2" fill="#6a6a6a"/>
<path d="M17 18 L21.5 23.5 M21.5 18 L17 23.5 M40 18 L44.5 23.5 M44.5 18 L40 23.5" stroke="#333" stroke-width="1.2"/>
<path d="M26 28 H36 L31 32.5 Z" fill="#6a6a6a"/>
</g>
<g transform="translate(985,596)">
<path d="M22 0 H40 L51 11 L56 21 L59.5 32 L61.5 38.5 V44 L53 50.5 L54.5 56 L46 61.5 V72 L42 75.6 H34 L31 73 L28 75.6 H20 L16.5 72 V61.5 L8 60 L7.5 56 L9 50.5 L0.5 44 V38.5 L2.5 32 L6 21 L11 11 Z" fill="#b8b8b8"/>
<path d="M3 38.5 L5 31 L9 21 L13 15 L18 40 L12 48 L9 48 L3 43 Z" fill="#969696"/>
<path d="M59 38.5 L57 31 L53 21 L49 15 L44 40 L50 48 L53 48 L59 43 Z" fill="#969696"/>
<path d="M23 2 H39 L48 11 L51 21 L51 35 L44 45 H18 L11 35 L11 21 L14 11 Z" fill="#a6a6a6"/>
<path d="M17 40 L22 44 L14 52 Z M45 40 L40 44 L48 52 Z" fill="#444" opacity="0.55"/>
<path d="M11 54 L19 47 H43 L51 54 L52 57 L45 60 V71 L41 74 H34 L31 71 L28 74 H21 L17.5 71 V60 L10 57 Z" fill="#969696"/>
<circle cx="31" cy="51" r="10.5" fill="#bcbcbc"/>
<rect x="29.5" y="61" width="3" height="13" fill="#b8b8b8"/>
<rect x="13.5" y="15" width="11.5" height="11.5" rx="2" fill="#5a5a5a"/>
<rect x="36.5" y="15" width="11.5" height="11.5" rx="2" fill="#5a5a5a"/>
<path d="M17 18 L21.5 23.5 M21.5 18 L17 23.5 M40 18 L44.5 23.5 M44.5 18 L40 23.5" stroke="#333" stroke-width="1.2"/>
<path d="M26 28 H36 L31 32.5 Z" fill="#5a5a5a"/>
</g>
<g fill="#43bd43"><rect x="934.9" y="376.0" width="26.5" height="4.4"/><rect x="957.0" y="380.4" width="8.8" height="13.3"/><rect x="939.3" y="393.7" width="22.1" height="4.4"/><rect x="934.9" y="398.1" width="8.8" height="17.7"/><rect x="934.9" y="415.8" width="30.9" height="4.4"/><rect x="974.1" y="376.0" width="22.1" height="4.4"/><rect x="969.7" y="380.4" width="8.8" height="13.3"/><rect x="991.8" y="380.4" width="8.8" height="13.3"/><rect x="974.1" y="393.7" width="22.1" height="4.4"/><rect x="969.7" y="398.1" width="8.8" height="17.7"/><rect x="991.8" y="398.1" width="8.8" height="17.7"/><rect x="974.1" y="415.8" width="22.1" height="4.4"/><rect x="1008.9" y="385.4" width="8.8" height="8.3"/><rect x="1008.9" y="407.5" width="8.8" height="8.3"/><rect x="1026.0" y="376.0" width="30.9" height="4.4"/><rect x="1026.0" y="380.4" width="8.8" height="13.3"/><rect x="1026.0" y="393.7" width="26.5" height="4.4"/><rect x="1048.1" y="398.1" width="8.8" height="17.7"/><rect x="1026.0" y="415.8" width="26.5" height="4.4"/><rect x="1060.7" y="376.0" width="30.9" height="4.4"/><rect x="1082.8" y="380.4" width="8.8" height="13.3"/><rect x="1078.4" y="389.3" width="8.8" height="4.4"/><rect x="1069.5" y="393.7" width="8.8" height="26.5"/></g>
<!-- green square -->
<rect x="484" y="378" width="127" height="127" rx="3" fill="#a3b577"/>
<g stroke="#5a7a2c" stroke-width="2.6" stroke-dasharray="7.8 7.6" fill="none"><path d="M489 381 H606"/><path d="M489 502.3 H606"/><path d="M487.2 382.5 V500"/><path d="M607.4 382.5 V500"/></g><g stroke="#2c4a10" stroke-width="1" stroke-dasharray="1.5 1.2" fill="none" opacity="0.9"><path d="M489 381 H497 M504 381 H512 M521 381 H529 M536 381 H544 M552 381 H560 M567 381 H575 M583 381 H591 M597 381 H605"/></g>
</svg>
</div>

<!-- right panel -->
<div class="a" style="left:1575px;top:24px;width:20px;height:1208px;background:#303030;border-radius:6px 0 0 0"></div>
<div class="a" style="left:1575px;top:189px;width:20px;height:2px;background:#1a1a1a"></div>
<div class="a" style="left:1575px;top:232px;width:20px;height:1px;background:#3a3a3a"></div>
<div class="a" style="left:1575px;top:1165px;width:20px;height:2px;background:#1a1a1a"></div>
<div class="a" style="left:1575px;top:1208px;width:20px;height:1px;background:#3a3a3a"></div>
<!-- bottom strip -->
<div class="a" style="left:-10px;top:1236px;width:66px;height:40px;background:#303030;border-radius:0 7px 0 0"></div>
<div class="a" style="left:-9px;top:1244px;height:36px;line-height:36px;font-size:25px;color:#adadad;white-space:nowrap;will-change:transform">ole</div>
<div class="a" style="left:1542px;top:1249px;width:6px"><i style="display:block;width:5.5px;height:5.5px;border-radius:50%;background:#aaa;margin-bottom:2px"></i><i style="display:block;width:5.5px;height:5.5px;border-radius:50%;background:#aaa;margin-bottom:2px"></i><i style="display:block;width:5.5px;height:5.5px;border-radius:50%;background:#aaa"></i></div>
</body></html>
